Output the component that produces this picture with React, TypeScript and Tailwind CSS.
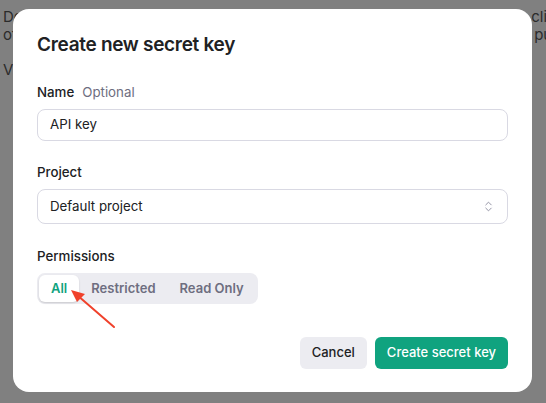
import { ChevronsUpDown } from "lucide-react";

const font = { fontFamily: "Inter, 'Noto Sans', sans-serif" };

export default function App() {
  return (
    <div
      className="relative w-[546px] h-[403px] overflow-hidden bg-[#808080] text-[#2b2b2b]"
      style={font}
    >
      {/* page behind the overlay */}
      <div className="pl-[3px] pt-[8px] text-[15px] leading-[18px]">
        <p className="whitespace-nowrap">
          Do not share your API key with others, or expose it in the browser or other client-side code
          <br />
          of your account, we may automatically disable any API key that has leaked publicly
        </p>
        <p className="mt-[17px]">View usage per API key on the Usage page.</p>
      </div>

      {/* dialog */}
      <div className="absolute left-[13px] top-[9px] w-[519px] h-[383px] rounded-2xl bg-white px-6 pt-[22px] text-[#202123]">
        <h2 className="text-[19px] leading-7 font-semibold tracking-[-0.3px]">Create new secret key</h2>

        <div className="mt-[23px] flex items-center gap-2 text-[13.3px] leading-5">
          <span className="font-medium">Name</span>
          <span className="text-[#6e6e80]">Optional</span>
        </div>
        <div className="mt-[7px] h-8 rounded-lg border border-[#d9d9e3] px-3 flex items-center text-[13.3px]">
          API key
        </div>

        <div className="mt-[21px] text-[13.3px] leading-5 font-medium">Project</div>
        <div className="mt-[7px] h-[35px] rounded-lg border border-[#d9d9e3] pl-3 pr-[12px] flex items-center justify-between text-[13.3px]">
          <span>Default project</span>
          <ChevronsUpDown className="w-[13px] h-[13px] text-[#8e8ea0]" strokeWidth={1.75} />
        </div>

        <div className="mt-[22px] text-[13.3px] leading-5 font-medium">Permissions</div>
        <div className="relative mt-[7px] inline-flex h-[31px] items-center rounded-lg bg-[#ececf1] p-[2px] text-[13px] font-semibold">
          <button className="h-[27px] px-3 rounded-md bg-white text-[#10a37f] shadow-[0_1px_2px_rgba(0,0,0,0.15)]">All</button>
          <button className="h-[27px] px-3 text-[#6e6e80]">Restricted</button>
          <button className="h-[27px] px-3 text-[#6e6e80]">Read Only</button>

          {/* annotation arrow */}
          <svg className="absolute left-[30px] top-[14px]" width="50" height="44" viewBox="0 0 50 44" fill="none">
            <path d="M47 40 L10 8" stroke="#f0412b" strokeWidth="2" strokeLinecap="round" />
            <path d="M4 3 L18 7 L10 15 Z" fill="#f0412b" />
          </svg>
        </div>

        <div className="mt-[33px] flex justify-end gap-2 text-[13px] font-medium">
          <button className="h-8 px-3 rounded-md bg-[#ececf1] text-[#202123]">Cancel</button>
          <button className="h-8 px-3 rounded-md bg-[#10a37f] text-white">Create secret key</button>
        </div>
      </div>
    </div>
  );
}
